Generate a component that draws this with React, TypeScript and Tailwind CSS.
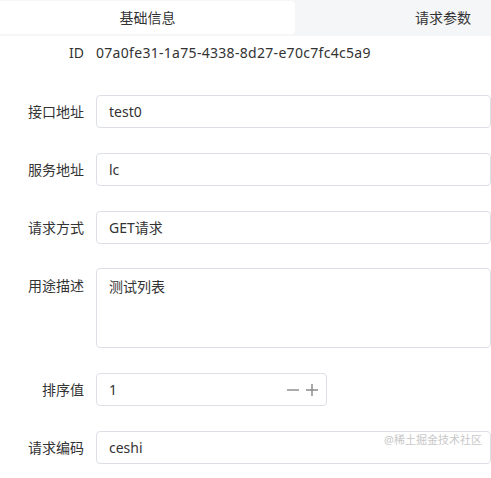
import React from 'react';

const font = { fontFamily: '"Noto Sans", "Noto Sans CJK SC", sans-serif' };

function Label({ children, top }: { children: React.ReactNode; top?: boolean }) {
  return (
    <div
      className={`w-[84px] shrink-0 text-right text-[14px] text-[#333] ${top ? 'pt-[7px]' : 'leading-[33px]'}`}
    >
      {children}
    </div>
  );
}

function TextInput({ value }: { value: string }) {
  return (
    <div className="ml-3 flex h-[33px] w-[480px] items-center rounded border border-[#dcdfe6] bg-white px-3 text-[14px] text-[#333]">
      {value}
    </div>
  );
}

export default function App() {
  return (
    <div className="relative h-[478px] w-[491px] overflow-hidden bg-white" style={font}>
      <div className="flex h-9 w-[592px] bg-[#f5f6f7] pt-[1px]">
        <div className="flex h-[33px] w-[295px] items-center justify-center rounded-r bg-white text-[14px] text-[#333]">
          基础信息
        </div>
        <div className="flex h-[33px] w-[296px] items-center justify-center text-[14px] text-[#333]">
          请求参数
        </div>
      </div>

      <div className="flex flex-col">
        <div className="flex h-[33px] items-center">
          <Label>ID</Label>
          <div className="ml-3 text-[14px] tracking-[0.3px] text-[#333]">07a0fe31-1a75-4338-8d27-e70c7fc4c5a9</div>
        </div>

        <div className="mt-[26px] flex items-center">
          <Label>接口地址</Label>
          <TextInput value="test0" />
        </div>

        <div className="mt-[25px] flex items-center">
          <Label>服务地址</Label>
          <TextInput value="lc" />
        </div>

        <div className="mt-[25px] flex items-center">
          <Label>请求方式</Label>
          <TextInput value="GET请求" />
        </div>

        <div className="mt-6 flex items-start">
          <Label top>用途描述</Label>
          <div className="ml-3 h-20 w-[480px] rounded border border-[#dcdfe6] bg-white px-3 pt-[7px] text-[14px] text-[#333]">
            测试列表
          </div>
        </div>

        <div className="mt-[25px] flex items-center">
          <Label>排序值</Label>
          <div className="ml-3 flex h-[33px] w-[231px] items-center rounded border border-[#dcdfe6] bg-white pl-3 pr-2 text-[14px] text-[#333]">
            <span className="flex-1">1</span>
            <svg width="12" height="12" viewBox="0 0 12 12" className="text-[#888]">
              <path d="M0 6h12" stroke="currentColor" strokeWidth="1.4" />
            </svg>
            <svg width="12" height="12" viewBox="0 0 12 12" className="ml-[7px] text-[#888]">
              <path d="M0 6h12M6 0v12" stroke="currentColor" strokeWidth="1.4" />
            </svg>
          </div>
        </div>

        <div className="mt-[25px] flex items-center">
          <Label>请求编码</Label>
          <TextInput value="ceshi" />
        </div>
      </div>

      <div className="absolute left-[384px] top-[432px] whitespace-nowrap text-[11px] text-[#c8c8c8]">@稀土掘金技术社区</div>
    </div>
  );
}
